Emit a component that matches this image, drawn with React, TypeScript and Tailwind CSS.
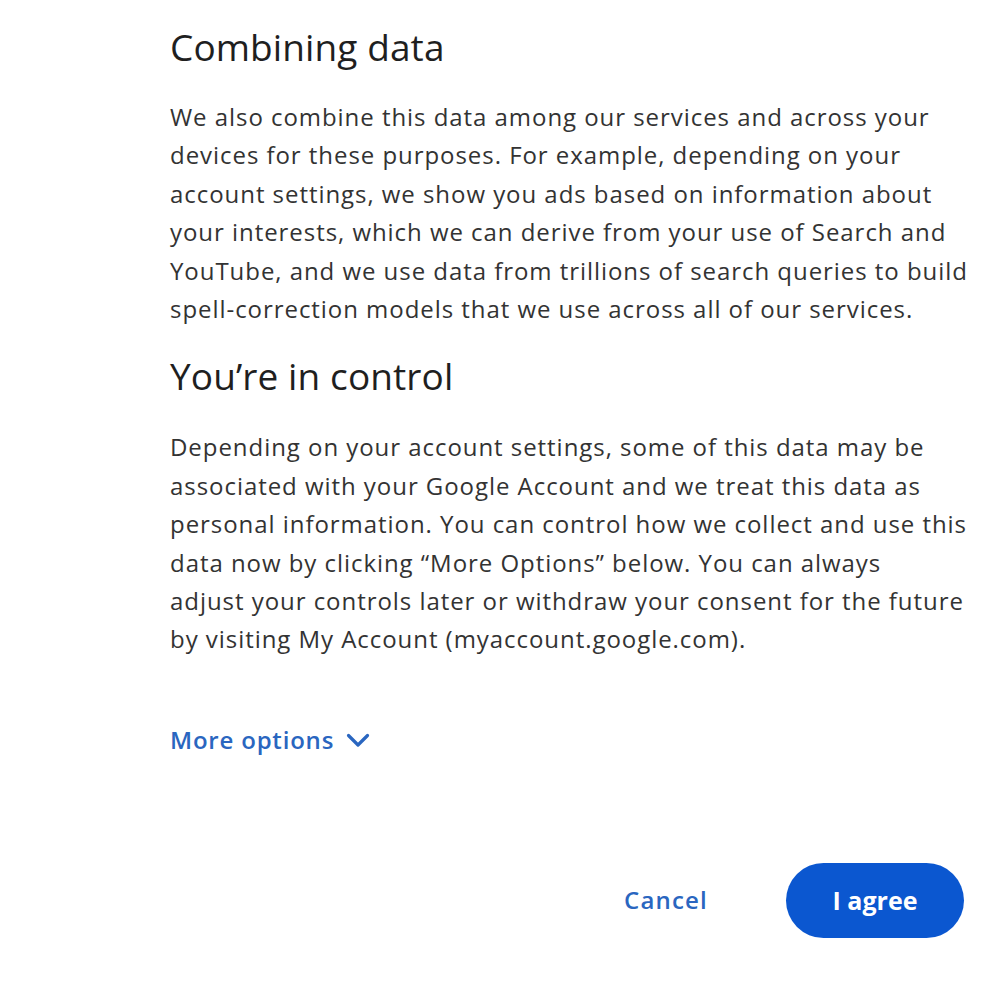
export default function App() {
  const combining = [
    "We also combine this data among our services and across your",
    "devices for these purposes. For example, depending on your",
    "account settings, we show you ads based on information about",
    "your interests, which we can derive from your use of Search and",
    "YouTube, and we use data from trillions of search queries to build",
    "spell-correction models that we use across all of our services.",
  ];
  const control = [
    "Depending on your account settings, some of this data may be",
    "associated with your Google Account and we treat this data as",
    "personal information. You can control how we collect and use this",
    "data now by clicking \u201cMore Options\u201d below. You can always",
    "adjust your controls later or withdraw your consent for the future",
    "by visiting My Account (myaccount.google.com).",
  ];

  return (
    <div className="h-[1000px] w-[1000px] bg-white font-['Open_Sans',sans-serif] text-[#1f1f1f]">
      <div className="pl-[170px] pt-[23px]">
        <h2 className="text-[37px] leading-[48px] font-normal tracking-[0.1px]">Combining data</h2>
        <p className="mt-[27px] text-[24px] leading-[38.4px] tracking-[0.95px] text-[#333333]">
          {combining.map((l) => (
            <span key={l} className="block whitespace-nowrap">{l}</span>
          ))}
        </p>
        <h2 className="mt-[24px] text-[37px] leading-[48px] font-normal tracking-[0.1px]">You’re in control</h2>
        <p className="mt-[28px] text-[24px] leading-[38.4px] tracking-[0.95px] text-[#333333]">
          {control.map((l) => (
            <span key={l} className="block whitespace-nowrap">{l}</span>
          ))}
        </p>
        <button className="mt-[62px] flex items-center gap-[12px] text-[24px] leading-[38px] font-semibold tracking-[0.8px] text-[#2a66c0]">
          More options
          <svg width="24" height="24" viewBox="0 0 24 24" fill="none" stroke="currentColor" strokeWidth="3.2" strokeLinecap="round" strokeLinejoin="round">
            <path d="M2.5 7.5L12 17l9.5-9.5" />
          </svg>
        </button>
      </div>
      <div className="mt-[104px] flex items-center justify-end gap-[78px] pr-[36px]">
        <button className="text-[24px] font-semibold tracking-[1.2px] text-[#2a66c0]">Cancel</button>
        <button className="h-[75px] w-[178px] rounded-full bg-[#0b57d0] text-[25px] font-bold text-white">
          I agree
        </button>
      </div>
    </div>
  );
}
